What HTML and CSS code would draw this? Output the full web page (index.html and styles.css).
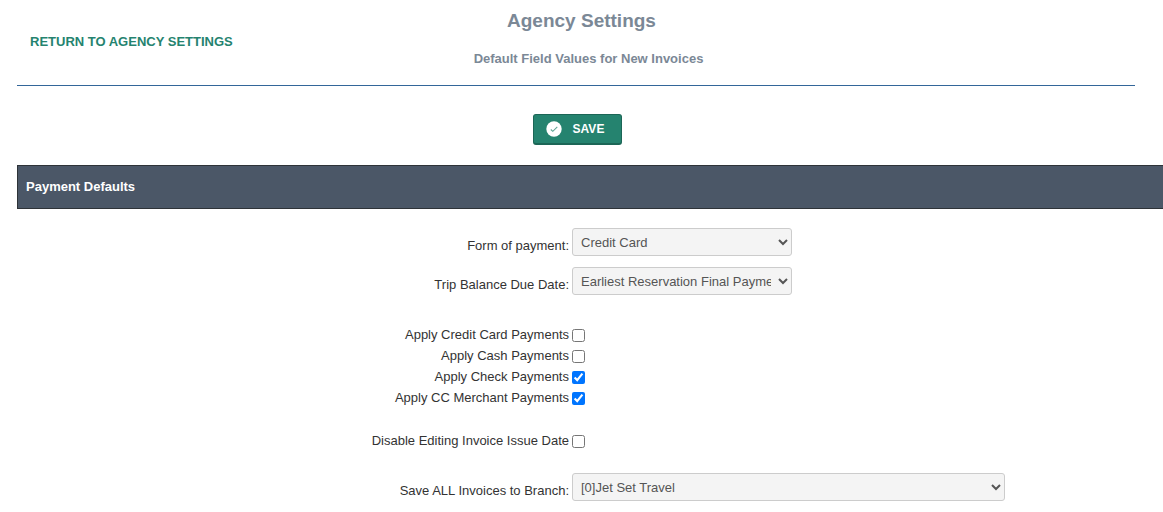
FILE: index.html
```html
<!DOCTYPE html>
<html lang="en">
<head>
<meta charset="utf-8">
<title>Agency Settings</title>
<link rel="stylesheet" href="styles.css">
</head>
<body>
<header class="page-header">
  <a class="return-link" href="#">RETURN TO AGENCY SETTINGS</a>
  <div class="titles">
    <h1 class="title">Agency Settings</h1>
    <h2 class="subtitle">Default Field Values for New Invoices</h2>
  </div>
</header>
<form class="settings">
  <div class="actions">
    <button class="save" type="button">
      <svg class="save-icon" viewBox="0 0 16 16" aria-hidden="true"><circle cx="8" cy="8" r="7.7" fill="#fff"/><path d="M4.8 8.5 6.8 10.3 11.3 5.9" fill="none" stroke="#5fa595" stroke-width="1.1"/></svg>
      <span>SAVE</span>
    </button>
  </div>
  <h3 class="section-title">Payment Defaults</h3>
  <div class="fields">
    <div class="row row-select">
      <label class="label" for="form-payment">Form of payment:</label>
      <select class="select" id="form-payment"><option>Credit Card</option></select>
    </div>
    <div class="row row-select">
      <label class="label" for="due-date">Trip Balance Due Date:</label>
      <select class="select" id="due-date"><option>Earliest Reservation Final Payment Date</option></select>
    </div>
    <div class="checks">
      <div class="row"><label class="label" for="apply-credit">Apply Credit Card Payments</label><input class="check" id="apply-credit" type="checkbox"></div>
      <div class="row"><label class="label" for="apply-cash">Apply Cash Payments</label><input class="check" id="apply-cash" type="checkbox"></div>
      <div class="row"><label class="label" for="apply-check">Apply Check Payments</label><input class="check" id="apply-check" type="checkbox" checked></div>
      <div class="row"><label class="label" for="apply-merchant">Apply CC Merchant Payments</label><input class="check" id="apply-merchant" type="checkbox" checked></div>
    </div>
    <div class="checks">
      <div class="row"><label class="label" for="disable-edit">Disable Editing Invoice Issue Date</label><input class="check" id="disable-edit" type="checkbox"></div>
    </div>
    <div class="row row-select">
      <label class="label" for="branch">Save ALL Invoices to Branch:</label>
      <select class="select select-wide" id="branch"><option>[0]Jet Set Travel</option></select>
    </div>
  </div>
</form>
</body>
</html>
```
FILE: styles.css
```css
* { box-sizing: border-box; }
body {
  margin: 0;
  padding-left: 17px;
  background: #fff;
  color: #333;
  font: 13px/21px "Liberation Sans", Arial, sans-serif;
}
.page-header {
  display: grid;
  grid-template-columns: 1fr auto 1fr;
  align-items: center;
  margin-right: 28px;
  padding: 8px 0 14px 13px;
  border-bottom: 1px solid #336699;
}
.return-link {
  color: #25836f;
  font-weight: bold;
  text-decoration: none;
  padding-top: 4px;
}
.titles { padding-left: 12px; text-align: center; color: #7b8896; }
.title { margin: 0 14px 13px 0; font-size: 19px; line-height: 26px; }
.subtitle { margin: 0; font-size: 13px; line-height: 24px; }
.actions {
  display: flex;
  justify-content: center;
  margin-right: 25px;
  padding: 28px 0 20px;
}
.save {
  display: flex;
  align-items: center;
  gap: 11px;
  height: 31px;
  padding: 0 17px 1px 12px;
  border: 1px solid #1c6656;
  border-bottom-width: 2px;
  border-radius: 3px;
  background: #25836f;
  color: #fff;
  font: bold 12px "Liberation Sans", Arial, sans-serif;
}
.save-icon { width: 16px; height: 16px; }
.section-title {
  margin: 0;
  padding: 0 8px;
  border: 1px solid #2e3338;
  border-right: 0;
  background: #4b5767;
  color: #fff;
  font-size: 13px;
  line-height: 42px;
}
.fields { padding-top: 19px; }
.row {
  display: grid;
  grid-template-columns: 552px 1fr;
  column-gap: 3px;
  align-items: center;
}
.row-select { min-height: 28px; margin-bottom: 11px; }
.label { text-align: right; }
.row-select .label { padding-top: 7px; }
.select {
  width: 220px;
  height: 28px;
  padding: 0 4px;
  border: 1px solid #ccc;
  border-radius: 3px;
  background: #f4f4f4;
  color: #555;
  font: 13px "Liberation Sans", Arial, sans-serif;
}
.select-wide { width: 433px; }
.checks { padding: 18px 0 4px; }
.checks + .checks { padding-bottom: 22px; }
.check { width: 13px; height: 13px; margin: 2px 0 0; }
```
